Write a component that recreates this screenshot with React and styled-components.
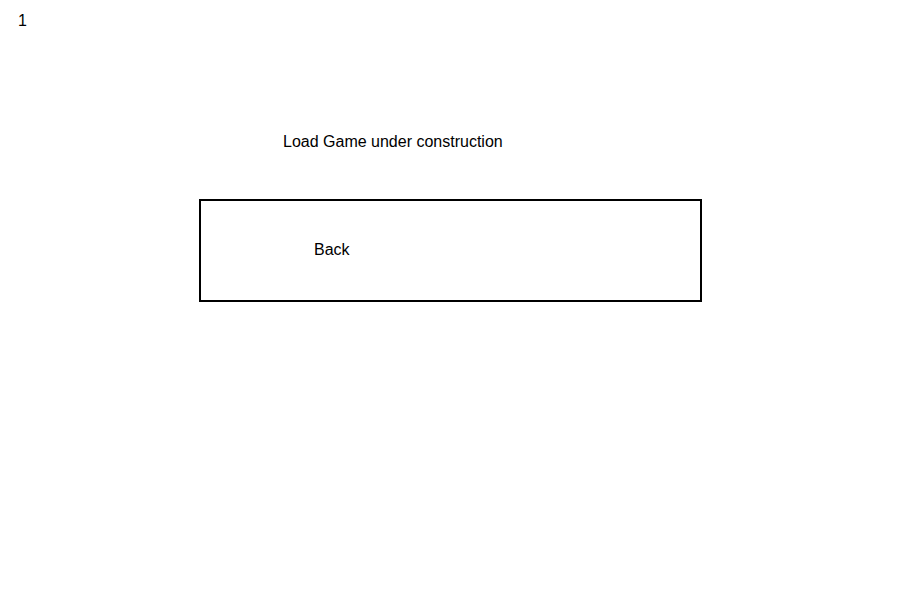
import React from "react";
import styled, { createGlobalStyle } from "styled-components";

const GlobalStyle = createGlobalStyle`
  html, body {
    margin: 0;
    padding: 0;
    background: #ffffff;
  }
  body {
    font-family: "Liberation Sans", Arial, sans-serif;
    font-size: 16px;
    color: #000;
  }
`;

// Whole screen
const Screen = styled.div`
  width: 900px;
  height: 600px;
  box-sizing: border-box;
  padding: 12px 0 0 18px;
  display: flex;
  flex-direction: column;
  align-items: flex-start;
`;

// Frame counter in the corner
const Counter = styled.div`
  line-height: 18px;
`;

// Screen title
const Title = styled.div`
  margin-top: 103px;
  margin-left: 265px;
  line-height: 18px;
`;

// Back button
const BackButton = styled.button`
  margin-top: 48px;
  margin-left: 181px;
  width: 503px;
  height: 103px;
  box-sizing: border-box;
  border: 2px solid #000;
  background: #fff;
  padding: 0 0 2px 113px;
  display: flex;
  align-items: center;
  font-family: "Liberation Sans", Arial, sans-serif;
  font-size: 16px;
  color: #000;
  cursor: pointer;
`;

const App = () => {
  return (
    <>
      <GlobalStyle />
      <Screen>
        <Counter>1</Counter>
        <Title>Load Game under construction</Title>
        <BackButton>Back</BackButton>
      </Screen>
    </>
  );
};

export default App;
